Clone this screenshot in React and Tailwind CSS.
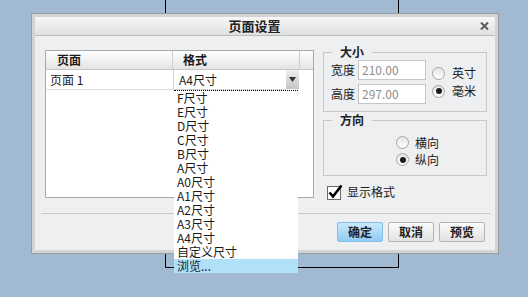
import React from "react";

const FONT = "font-['Noto_Sans_CJK_SC','Liberation_Sans',sans-serif]";

function Radio({ checked }) {
  return (
    <span className="w-[13px] h-[13px] rounded-full border border-[#a3a3a3] bg-gradient-to-b from-[#e4e4e4] to-white flex items-center justify-center shrink-0">
      {checked && <span className="w-[6px] h-[6px] rounded-full bg-[#1c1c1c]" />}
    </span>
  );
}

function Legend({ children }) {
  return (
    <legend className="ml-[8px] px-[8px] text-[12px] leading-[16px] font-bold text-[#202020]">
      {children}
    </legend>
  );
}

const items = ["F尺寸", "E尺寸", "D尺寸", "C尺寸", "B尺寸", "A尺寸", "A0尺寸", "A1尺寸", "A2尺寸", "A3尺寸", "A4尺寸", "自定义尺寸", "浏览..."];

export default function App() {
  return (
    <div className={`relative w-[528px] h-[297px] bg-[#a1b9d1] overflow-hidden pt-[13px] pl-[31px] ${FONT} text-[12px] text-[#1a1a1a]`}>
      <svg className="absolute inset-0 pointer-events-none" width="528" height="297">
        <line x1="165.5" y1="0" x2="165.5" y2="14" stroke="#000" />
        <line x1="398.5" y1="0" x2="398.5" y2="14" stroke="#000" />
        <polyline points="165.5,253 165.5,267.5 175,267.5" fill="none" stroke="#000" />
        <polyline points="296,267.5 398.5,267.5 398.5,253" fill="none" stroke="#000" />
      </svg>

      <div className="relative z-10 w-[468px] h-[241px] border border-[#9b9b9b] bg-[#d3d4d6] p-[3px] flex flex-col">
        {/* title bar */}
        <div className="h-[19px] shrink-0 flex items-center bg-gradient-to-b from-[#f7f7f7] to-[#dfe0e2] border-b border-[#bcbcbc]">
          <div className="flex-1 text-center text-[13px] leading-[16px] font-bold text-[#222]">页面设置</div>
          <div className="w-[21px] flex items-center justify-center">
            <svg width="9" height="8" viewBox="0 0 9 8">
              <path d="M1 0.5 L8 7.5 M8 0.5 L1 7.5" stroke="#5a5a5a" strokeWidth="2" />
            </svg>
          </div>
        </div>

        {/* body */}
        <div className="flex-1 bg-[#eeeff1] flex flex-col pt-[8px]">
          <div className="flex h-[154px] pl-[10px] pr-[8px] gap-[9px]">
            {/* table */}
            <div className="mt-[6px] w-[269px] h-[148px] border border-[#a9a9a9] bg-white flex flex-col">
              <div className="h-[19px] flex bg-gradient-to-b from-white to-[#e4e4e4] border-b border-[#c6c6c6] font-bold leading-[18px]">
                <div className="w-[127px] border-r border-[#cfcfcf] pl-[11px]">页面</div>
                <div className="w-[127px] border-r border-[#cfcfcf] pl-[10px]">格式</div>
                <div className="flex-1" />
              </div>
              <div className="flex h-[20px]">
                <div className="w-[127px] border-b border-[#dedede] pl-[4px] leading-[19px]">页面 1</div>
                <div className="relative w-[126px] h-[20px] flex bg-white border-l border-[#d4d4d4]">
                  <div className="flex-1 pl-[5px] leading-[19px] border-b border-[#cfcfcf]">A4尺寸</div>
                  <div className="w-[13px] h-[19px] bg-gradient-to-b from-[#f0f0f0] to-[#c4c4c4] flex items-center justify-center">
                    <svg width="7" height="5" viewBox="0 0 7 5">
                      <path d="M0 0 H7 L3.5 5 Z" fill="#333" />
                    </svg>
                  </div>
                  <div className="absolute top-[20px] left-0 w-[124px] bg-white border-t border-dotted border-black flex flex-col">
                    {items.map((t, i) => (
                      <div
                        key={t}
                        className={`h-[14px] leading-[14px] pl-[3px] ${i === items.length - 1 ? "bg-[#b1e1f9]" : ""}`}
                      >
                        {t}
                      </div>
                    ))}
                  </div>
                </div>
              </div>
            </div>

            {/* right column */}
            <div className="w-[164px] flex flex-col">
              <fieldset className="border border-[#c8c8c8]">
                <Legend>大小</Legend>
                <div className="flex items-center pb-[7px] pl-[7px]">
                  <div className="flex flex-col gap-[4px]">
                    <div className="flex items-center gap-[3px]">
                      <span className="w-[24px] leading-[20px]">宽度</span>
                      <div className="w-[68px] h-[20px] bg-white border border-[#c6c6c6] pl-[3px] leading-[18px] text-[#8e8e8e]">210.00</div>
                    </div>
                    <div className="flex items-center gap-[3px]">
                      <span className="w-[24px] leading-[20px]">高度</span>
                      <div className="w-[68px] h-[20px] bg-white border border-[#c6c6c6] pl-[3px] leading-[18px] text-[#8e8e8e]">297.00</div>
                    </div>
                  </div>
                  <div className="ml-[6px] flex flex-col">
                    <div className="h-[18px] flex items-center gap-[7px]"><Radio /><span>英寸</span></div>
                    <div className="h-[18px] flex items-center gap-[7px]"><Radio checked /><span>毫米</span></div>
                  </div>
                </div>
              </fieldset>

              <fieldset className="border border-[#c8c8c8]">
                <Legend>方向</Legend>
                <div className="pt-[6px] pb-[7px] pl-[72px]">
                  <div className="h-[17px] flex items-center gap-[6px]"><Radio /><span>横向</span></div>
                  <div className="h-[17px] flex items-center gap-[6px]"><Radio checked /><span>纵向</span></div>
                </div>
              </fieldset>

              <div className="mt-[8px] h-[15px] pl-[4px] flex items-center gap-[4px]">
                <svg width="16" height="16" viewBox="0 0 16 16" className="shrink-0">
                  <rect x="0.5" y="2.5" width="13" height="13" fill="#fff" stroke="#6a6a6a" />
                  <path d="M2.5 8.5 L6 12.5 L14.5 1.5" fill="none" stroke="#000" strokeWidth="2.6" />
                </svg>
                <span className="leading-[15px]">显示格式</span>
              </div>
            </div>
          </div>

          <div className="mt-[15px] ml-[6px] mr-[5px] h-px bg-[#c9c9c9]" />

          <div className="mt-[8px] flex justify-end gap-[5px] pr-[10px]">
            <button className="w-[46px] h-[20px] rounded-[2px] border border-[#83bfe6] bg-gradient-to-b from-[#c8e8fb] to-[#8fcdf2] font-bold text-[12px] leading-[18px] text-[#222]">确定</button>
            <button className="w-[46px] h-[20px] rounded-[2px] border border-[#b4b4b4] bg-gradient-to-b from-[#fbfbfb] to-[#e2e2e2] font-bold text-[12px] leading-[18px] text-[#222]">取消</button>
            <button className="w-[46px] h-[20px] rounded-[2px] border border-[#b4b4b4] bg-gradient-to-b from-[#fbfbfb] to-[#e2e2e2] font-bold text-[12px] leading-[18px] text-[#222]">预览</button>
          </div>
        </div>
      </div>
    </div>
  );
}
